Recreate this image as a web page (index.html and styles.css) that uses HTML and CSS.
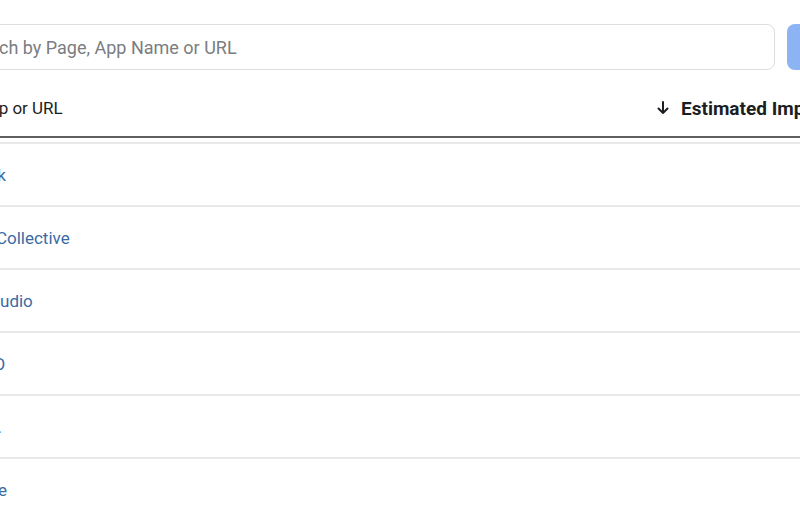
FILE: index.html
```html
<!DOCTYPE html>
<html lang="en">
<head>
<meta charset="utf-8">
<title>Ad Library search</title>
<link rel="stylesheet" href="styles.css">
</head>
<body>
<div class="page">
  <div class="search-bar">
    <div class="search-input">
      <span class="search-icon">
        <svg width="16" height="16" viewBox="0 0 16 16"><circle cx="7" cy="7" r="5" fill="none" stroke="#65676b" stroke-width="1.6"/><path d="M11 11l4 4" stroke="#65676b" stroke-width="1.6" stroke-linecap="round"/></svg>
      </span>
      <span class="placeholder">Search by Page, App Name or URL</span>
    </div>
    <div class="search-btn">Search</div>
  </div>
  <div class="table">
    <div class="thead">
      <div class="th th-name">Page, App or URL</div>
      <div class="th th-imp">
        <svg class="arrow" width="12" height="14" viewBox="0 0 12 14"><path d="M6 1v11M1.5 7.5L6 12l4.5-4.5" fill="none" stroke="#1c1e21" stroke-width="2" stroke-linecap="round" stroke-linejoin="round"/></svg>
        <span>Estimated Impressions</span>
      </div>
    </div>
    <div class="row"><a class="name">Facebook</a><span class="imp"></span></div>
    <div class="row"><a class="name">Fashion Collective</a><span class="imp"></span></div>
    <div class="row"><a class="name">Sound Studio</a><span class="imp"></span></div>
    <div class="row"><a class="name">CHICAGO</a><span class="imp"></span></div>
    <div class="row"><a class="name">Hulu, Inc.</a><span class="imp"></span></div>
    <div class="row"><a class="name">Free Time</a><span class="imp"></span></div>
  </div>
</div>
</body>
</html>
```
FILE: styles.css
```css
html, body {
  margin: 0;
  padding: 0;
  background: #ffffff;
  overflow: hidden;
}
body {
  font-family: Roboto, "Liberation Sans", Arial, sans-serif;
  color: #1c1e21;
}
.page {
  width: 1000px;
  margin-left: -72px;
  padding-top: 24px;
}
.search-bar {
  display: flex;
  gap: 12px;
  height: 46px;
}
.search-input {
  width: 847px;
  box-sizing: border-box;
  border: 1.5px solid #dedede;
  border-radius: 8px;
  display: flex;
  align-items: center;
  padding-left: 8px;
  gap: 10px;
}
.search-icon {
  display: flex;
}
.placeholder {
  font-size: 18px;
  color: #7a7d81;
  white-space: nowrap;
}
.search-btn {
  width: 120px;
  border-radius: 8px;
  background: #8cb4f4;
  color: #fff;
  font-size: 16px;
  display: flex;
  align-items: center;
  justify-content: center;
}
.table {
  margin-top: 16px;
}
.thead {
  display: grid;
  grid-template-columns: 729px 1fr;
  height: 44px;
  padding-bottom: 6px;
  align-items: center;
  border-bottom: 2px solid #5f5f5f;
  margin-bottom: 4px;
}
.th {
  white-space: nowrap;
}
.th-name {
  font-size: 17px;
  padding-left: 4px;
  color: #1c1e21;
}
.th-imp {
  font-size: 19px;
  font-weight: 700;
  display: flex;
  align-items: center;
  gap: 12px;
}
.arrow {
  display: block;
}
.row {
  display: grid;
  grid-template-columns: 729px 1fr;
  height: 63px;
  box-sizing: border-box;
  border-top: 2px solid #e8e8e8;
  align-items: center;
}
.name {
  font-size: 17px;
  padding-left: 4px;
  color: #3b6aa5;
  white-space: nowrap;
}
```
